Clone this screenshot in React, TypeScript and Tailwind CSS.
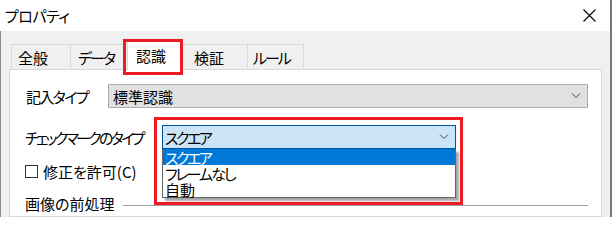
import React from "react";

const TABS = [
  { label: "全般", w: "w-[59px]", pl: "pl-[6px]", tr: "" },
  { label: "データ", w: "w-[59px]", pl: "pl-[7px]", tr: "tracking-[-2px]" },
  { label: "認識", w: "w-[54px]", pl: "pl-[8px]", tr: "", active: true },
  { label: "検証", w: "w-[68px]", pl: "pl-[14px]", tr: "" },
  { label: "ルール", w: "w-[57px]", pl: "pl-[5px]", tr: "tracking-[-2px]" },
];

const OPTIONS = [
  { label: "スクエア", tr: "tracking-[-2.5px]" },
  { label: "フレームなし", tr: "tracking-[-2px]" },
  { label: "自動", tr: "" },
];

function Chevron() {
  return (
    <svg width="10" height="6" viewBox="0 0 10 6" fill="none" stroke="#444" strokeWidth="1">
      <path d="M1 0.5 L5 4.5 L9 0.5" />
    </svg>
  );
}

export default function App() {
  return (
    <div
      className="w-[612px] h-[217px] overflow-hidden bg-[#f0f0f0] border-r-2 border-[#777777] flex flex-col text-[15px] text-black"
      style={{ fontFamily: '"Noto Sans CJK JP", "Noto Sans", sans-serif', fontFeatureSettings: '"palt"' }}
    >
      {/* Title bar */}
      <div className="h-[31px] bg-white flex items-center justify-between pl-[5px] pr-[14px] shrink-0">
        <span className="leading-none tracking-[-0.5px]">プロパティ</span>
        <svg width="13" height="13" viewBox="0 0 13 13" stroke="#000" strokeWidth="1.1">
          <path d="M0.5 0.5 L12.5 12.5 M12.5 0.5 L0.5 12.5" />
        </svg>
      </div>

      <div className="flex-1 flex flex-col pl-[8px] pr-[8px] border-l border-[#8c8c8c]">
        {/* Tabs */}
        <div className="mt-[13px] h-[25px] flex items-end pl-[2px] shrink-0">
          {TABS.map((t, i) => (
            <div
              key={t.label}
              className={
                t.active
                  ? `relative z-10 ${t.w} h-[29px] -mb-px bg-white border-t border-x border-[#d9d9d9] flex items-center ${t.pl} -mx-[2px] pb-[2px]`
                  : `${t.w} h-[25px] bg-[#f0f0f0] border-t border-l border-[#d9d9d9] flex items-center ${t.pl} ${
                      i === TABS.length - 1 ? "border-r" : ""
                    }`
              }
            >
              <span className={`leading-none whitespace-nowrap ${t.tr}`}>{t.label}</span>
              {t.active && (
                <div className="absolute -left-[5px] -top-[3px] -right-[3px] -bottom-[5px] border-[3px] border-[#ec1c24] pointer-events-none" />
              )}
            </div>
          ))}
        </div>

        {/* Panel */}
        <div className="flex-1 bg-white border border-[#d9d9d9] pl-[16px] pr-[13px] pt-[14px]">
          <div className="flex items-center h-[24px]">
            <span className="w-[82px] shrink-0 leading-none whitespace-nowrap tracking-[-1.6px]">記入タイプ</span>
            <div className="flex-1 h-[24px] bg-[#e1e1e1] border border-[#adadad] flex items-center justify-between pl-[4px] pr-[6px]">
              <span className="leading-none">標準認識</span>
              <Chevron />
            </div>
          </div>

          <div className="flex items-center h-[24px] mt-[17px] -ml-px">
            <span className="w-[137px] shrink-0 leading-none whitespace-nowrap tracking-[-2.7px]">
              チェックマークのタイプ
            </span>
            <div className="relative w-[294px] h-[24px]">
              <div className="h-full bg-[#cce4f7] border border-[#005499] flex items-center justify-between pl-[2px] pr-[6px]">
                <span className="leading-none tracking-[-2.5px]">スクエア</span>
                <Chevron />
              </div>
              {/* Open list */}
              <div className="absolute left-0 top-full w-full z-10 bg-white border border-t-0 border-[#646464] shadow-[3px_3px_2px_rgba(0,0,0,0.35)]">
                {OPTIONS.map((o, i) => (
                  <div
                    key={o.label}
                    className={`h-[16px] flex items-center pl-[2px] ${i === 0 ? "bg-[#0078d7] text-white" : ""}`}
                  >
                    <span className={`leading-none whitespace-nowrap ${o.tr}`}>{o.label}</span>
                  </div>
                ))}
              </div>
              <div className="absolute -left-[8px] -top-[8px] -right-[7px] -bottom-[56px] z-20 border-[3px] border-[#ec1c24] pointer-events-none" />
            </div>
          </div>

          <div className="flex items-center h-[18px] mt-[13px] -ml-px">
            <div className="w-[13px] h-[13px] border border-[#333333] bg-white" />
            <span className="ml-[5px] leading-none whitespace-nowrap">修正を許可(C)</span>
          </div>

          <div className="flex items-center h-[18px] mt-[14px] -ml-px">
            <span className="leading-none whitespace-nowrap">画像の前処理</span>
            <div className="flex-1 h-px bg-[#a0a0a0] ml-[9px] mt-[4px]" />
          </div>
        </div>
      </div>
    </div>
  );
}
